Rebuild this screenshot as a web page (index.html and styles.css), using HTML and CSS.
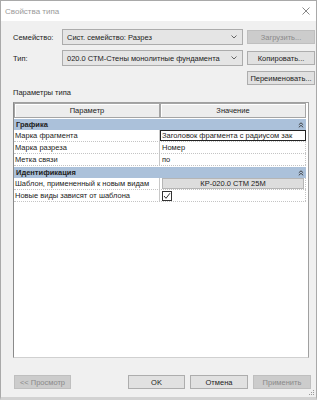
FILE: index.html
```html
<!DOCTYPE html>
<html lang="ru">
<head>
<meta charset="utf-8">
<title>Свойства типа</title>
<link rel="stylesheet" href="styles.css">
</head>
<body>
<div class="window">
  <div class="titlebar">
    <span class="title">Свойства типа</span>
    <svg class="close" width="8" height="8" viewBox="0 0 8 8"><path d="M0.5 0.5L7.5 7.5M7.5 0.5L0.5 7.5" stroke="#7a7a7a" stroke-width="0.9" fill="none"/></svg>
  </div>
  <div class="content">
    <div class="form">
      <span class="label">Семейство:</span>
      <div class="select"><span>Сист. семейство: Разрез</span><svg width="6" height="4" viewBox="0 0 6 4"><path d="M0.5 0.5L3 3L5.5 0.5" stroke="#555" stroke-width="0.9" fill="none"/></svg></div>
      <div class="btn disabled">Загрузить...</div>
      <span class="label">Тип:</span>
      <div class="select"><span>020.0 СТМ-Стены монолитные фундамента</span><svg width="6" height="4" viewBox="0 0 6 4"><path d="M0.5 0.5L3 3L5.5 0.5" stroke="#555" stroke-width="0.9" fill="none"/></svg></div>
      <div class="btn">Копировать...</div>
      <div class="btn rename">Переименовать...</div>
    </div>
    <div class="section-label">Параметры типа</div>
    <div class="grid">
      <div class="head-row">
        <div class="head">Параметр</div>
        <div class="head">Значение</div>
      </div>
      <div class="group"><span>Графика</span><svg width="6" height="6" viewBox="0 0 6 6"><path d="M0.8 2.8L3 0.8L5.2 2.8M0.8 5.3L3 3.3L5.2 5.3" stroke="#333" stroke-width="0.9" fill="none"/></svg></div>
      <div class="row"><div class="name">Марка фрагмента</div><div class="value edit"><span>Заголовок фрагмента с радиусом зак</span></div></div>
      <div class="row"><div class="name">Марка разреза</div><div class="value">Номер</div></div>
      <div class="row"><div class="name">Метка связи</div><div class="value">по</div></div>
      <div class="group"><span>Идентификация</span><svg width="6" height="6" viewBox="0 0 6 6"><path d="M0.8 2.8L3 0.8L5.2 2.8M0.8 5.3L3 3.3L5.2 5.3" stroke="#333" stroke-width="0.9" fill="none"/></svg></div>
      <div class="row"><div class="name">Шаблон, примененный к новым видам</div><div class="value"><div class="vbtn">КР-020.0 СТМ 25М</div></div></div>
      <div class="row"><div class="name">Новые виды зависят от шаблона</div><div class="value"><span class="check"><svg width="8" height="8" viewBox="0 0 8 8"><path d="M1 4L3 6.3L7 1.2" stroke="#333" stroke-width="1" fill="none"/></svg></span></div></div>
    </div>
  </div>
  <div class="footer">
    <div class="btn disabled preview">&lt;&lt; Просмотр</div>
    <div class="actions">
      <div class="btn ok">OK</div>
      <div class="btn cancel">Отмена</div>
      <div class="btn disabled apply">Применить</div>
    </div>
  </div>
  <svg class="grip" width="6" height="6" viewBox="0 0 6 6"><g fill="#9a9a9a"><rect x="4" y="0" width="1" height="1"/><rect x="2" y="2" width="1" height="1"/><rect x="4" y="2" width="1" height="1"/><rect x="0" y="4" width="1" height="1"/><rect x="2" y="4" width="1" height="1"/><rect x="4" y="4" width="1" height="1"/></g></svg>
</div>
</body>
</html>
```
FILE: styles.css
```css
* { box-sizing: border-box; }
html, body { margin: 0; padding: 0; }
body {
  font-family: "Liberation Sans", Arial, sans-serif;
  font-size: 7.5px;
  color: #222;
  background: #f0f0f0;
}
.window {
  position: relative;
  width: 317px;
  height: 400px;
  background: #f0f0f0;
  border: 1px solid #a9a9a9;
  border-bottom: 3px solid #d2d2d2;
  display: flex;
  flex-direction: column;
}
.titlebar {
  height: 20px;
  background: #fff;
  display: flex;
  align-items: center;
  justify-content: space-between;
  padding: 0 6px 0 4px;
  color: #9a9a9a;
  font-size: 8px;
  flex: none;
}
.close { display: block; }
.content {
  padding: 8px 5px 0 12px;
}
.form {
  display: grid;
  grid-template-columns: 45px 181px 68px;
  grid-template-rows: 16px 16px 14px;
  column-gap: 4px;
  row-gap: 5px;
  align-items: center;
}
.label { color: #222; }
.select {
  height: 16px;
  background: #e5e5e5;
  border: 1px solid #acacac;
  display: flex;
  align-items: center;
  justify-content: space-between;
  padding: 0 5px 0 4px;
  white-space: nowrap;
  overflow: hidden;
}
.select svg { flex: none; }
.btn {
  height: 14px;
  background: #e1e1e1;
  border: 1px solid #adadad;
  display: flex;
  align-items: center;
  justify-content: center;
  white-space: nowrap;
  color: #222;
}
.btn.disabled {
  background: #cccccc;
  border-color: #bfbfbf;
  color: #8a8a8a;
}
.rename { grid-column: 3; }
.section-label {
  margin-top: 3px;
  height: 10px;
  line-height: 10px;
}
.grid {
  margin-top: 4px;
  width: 296px;
  height: 256px;
  background: #fff;
  border: 1px solid #a0a0a0;
  border-left-color: #8a8a8a;
  border-bottom-color: #d0d0d0;
  padding-right: 2px;
}
.head-row {
  display: grid;
  grid-template-columns: 146px 146px;
  height: 15px;
  margin-bottom: 1px;
}
.head {
  background: #ededed;
  border: 1px solid #a5a5a5;
  box-shadow: inset 1px 1px 0 #fff;
  display: flex;
  align-items: center;
  justify-content: center;
}
.group {
  height: 11px;
  background: #abc1da;
  font-weight: bold;
  display: flex;
  align-items: center;
  justify-content: space-between;
  padding: 0 2px 0 2px;
}
.row {
  display: grid;
  grid-template-columns: 146px 146px;
  height: 12px;
  border-bottom: 1px dotted #c4c4c4;
}
.name {
  padding-left: 1px;
  border-right: 1px solid #c8c8c8;
  display: flex;
  align-items: center;
  white-space: nowrap;
  overflow: hidden;
}
.value {
  display: flex;
  align-items: center;
  padding-left: 2px;
  border-right: 1px dotted #c4c4c4;
  white-space: nowrap;
  overflow: hidden;
}
.value.edit {
  border: 1px solid #222;
  padding-left: 1px;
}
.row + .group { margin-top: 1px; }
.vbtn {
  flex: 1;
  height: 11px;
  margin-right: 1px;
  background: #dddddd;
  border: 1px solid #b5b5b5;
  display: flex;
  align-items: center;
  justify-content: center;
}
.check {
  width: 10px;
  height: 10px;
  border: 1px solid #333;
  display: flex;
  align-items: center;
  justify-content: center;
  background: #fff;
}
.check svg { display: block; }
.footer {
  margin-top: auto;
  padding: 0 5px 8px 13px;
  display: flex;
  justify-content: space-between;
}
.preview { width: 57px; }
.actions { display: flex; gap: 5px; }
.ok { width: 57px; }
.cancel { width: 58px; }
.apply { width: 58px; }
.grip {
  position: absolute;
  right: 1px;
  bottom: 1px;
}
```
